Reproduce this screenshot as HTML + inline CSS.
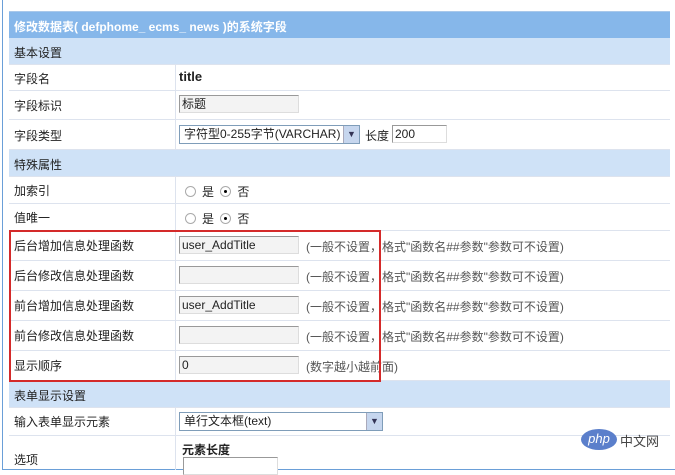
<!DOCTYPE html>
<html><head><meta charset="utf-8"><style>
body{margin:0;width:675px;height:473px;overflow:hidden;background:#fff;font-family:"Liberation Sans","Noto Sans CJK SC",sans-serif;font-size:12px;color:#222;position:relative}
.r{position:absolute;left:9px;width:661px;border-bottom:1px solid #dde3ee;box-sizing:border-box}
.l{position:absolute;left:5px;}
.h{background:#cfe2f7}
.v{position:absolute;left:166px;top:0;bottom:0;border-left:1px solid #dde3ee}
.c{position:absolute;left:172px}
.in{position:absolute;width:120px;height:18px;border:1px solid #999;border-right-color:#ddd;border-bottom-color:#ddd;background:#f3f3f3;box-sizing:border-box;font-size:12px;line-height:16px;padding-left:2px}
.t{position:absolute;color:#555;font-size:12px}
.rad{display:inline-block;width:9px;height:9px;border:1px solid #aaa;border-radius:50%;vertical-align:-1px;margin-right:6px;position:relative}
.rad.on::after{content:"";position:absolute;left:3px;top:3px;width:3px;height:3px;background:#000;border-radius:50%}
.sel{position:absolute;height:19px;border:1px solid #7f9db9;box-sizing:border-box;background:#fff;line-height:17px;padding-left:4px}
.arr{position:absolute;right:0;top:0;width:15px;height:17px;background:#c6d6ee;border-left:1px solid #aab;font-size:9px;text-align:center;line-height:17px;color:#335}
</style></head><body>
<div style="position:absolute;left:2px;top:0;width:1px;height:470px;background:#6a9fd8"></div>
<div style="position:absolute;left:2px;top:469px;width:673px;height:1px;background:#6a9fd8"></div>
<div style="position:absolute;left:9px;top:11px;width:661px;height:1px;background:#a9c8ea"></div>
<div class="r" style="top:12px;height:26px;background:#86b7ea;border:0"><span class="l" style="top:6px;color:#fff;font-weight:bold">修改数据表( defphome_ ecms_ news )的系统字段</span></div>
<div class="r h" style="top:38px;height:27px"><span class="l" style="top:6px">基本设置</span></div>
<div class="r" style="top:65px;height:26px"><div class="v"></div><span class="l" style="top:5px">字段名</span><b class="c" style="top:4px;left:170px;font-size:13px">title</b></div>
<div class="r" style="top:91px;height:29px"><div class="v"></div><span class="l" style="top:6px">字段标识</span><div class="in" style="left:170px;top:4px">标题</div></div>
<div class="r" style="top:120px;height:30px"><div class="v"></div><span class="l" style="top:7px">字段类型</span><div class="sel" style="left:170px;top:5px;width:181px">字符型0-255字节(VARCHAR)<div class="arr">▼</div></div><span class="t" style="left:356px;top:7px;color:#222">长度</span><div class="in" style="left:383px;top:5px;width:55px;background:#fff">200</div></div>
<div class="r h" style="top:150px;height:27px"><span class="l" style="top:6px">特殊属性</span></div>
<div class="r" style="top:177px;height:27px"><div class="v"></div><span class="l" style="top:5px">加索引</span><span class="c" style="left:176px;top:6px"><span class="rad"></span>是 <span class="rad on" style="margin-left:3px"></span>否</span></div>
<div class="r" style="top:204px;height:27px"><div class="v"></div><span class="l" style="top:5px">值唯一</span><span class="c" style="left:176px;top:6px"><span class="rad"></span>是 <span class="rad on" style="margin-left:3px"></span>否</span></div>
<div class="r" style="top:231px;height:30px"><div class="v"></div><span class="l" style="top:6px">后台增加信息处理函数</span><div class="in" style="left:170px;top:5px">user_AddTitle</div><span class="t" style="left:297px;top:7px">(一般不设置，格式"函数名##参数"参数可不设置)</span></div>
<div class="r" style="top:261px;height:30px"><div class="v"></div><span class="l" style="top:6px">后台修改信息处理函数</span><div class="in" style="left:170px;top:5px"></div><span class="t" style="left:297px;top:7px">(一般不设置，格式"函数名##参数"参数可不设置)</span></div>
<div class="r" style="top:291px;height:30px"><div class="v"></div><span class="l" style="top:6px">前台增加信息处理函数</span><div class="in" style="left:170px;top:5px">user_AddTitle</div><span class="t" style="left:297px;top:7px">(一般不设置，格式"函数名##参数"参数可不设置)</span></div>
<div class="r" style="top:321px;height:30px"><div class="v"></div><span class="l" style="top:6px">前台修改信息处理函数</span><div class="in" style="left:170px;top:5px"></div><span class="t" style="left:297px;top:7px">(一般不设置，格式"函数名##参数"参数可不设置)</span></div>
<div class="r" style="top:351px;height:30px"><div class="v"></div><span class="l" style="top:6px">显示顺序</span><div class="in" style="left:170px;top:5px">0</div><span class="t" style="left:297px;top:7px">(数字越小越前面)</span></div>
<div class="r h" style="top:381px;height:27px"><span class="l" style="top:6px">表单显示设置</span></div>
<div class="r" style="top:408px;height:28px"><div class="v"></div><span class="l" style="top:5px">输入表单显示元素</span><div class="sel" style="left:170px;top:4px;width:204px">单行文本框(text)<div class="arr">▼</div></div></div>
<div class="r" style="top:436px;height:34px;border:0"><div class="v"></div><span class="l" style="top:15px">选项</span><b style="position:absolute;left:173px;top:5px">元素长度</b><div class="in" style="left:174px;top:21px;width:95px;background:#fff"></div></div>
<div style="position:absolute;left:9px;top:230px;width:372px;height:152px;border:2px solid #d42a2a;box-sizing:border-box"></div>
<div style="position:absolute;left:581px;top:429px;width:36px;height:21px;background:#5b7fcb;border-radius:50%;color:#fff;font-size:13px;text-align:center;line-height:20px;font-style:italic">php</div>
<span style="position:absolute;left:620px;top:431px;font-size:13px;color:#444">中文网</span>
</body></html>
